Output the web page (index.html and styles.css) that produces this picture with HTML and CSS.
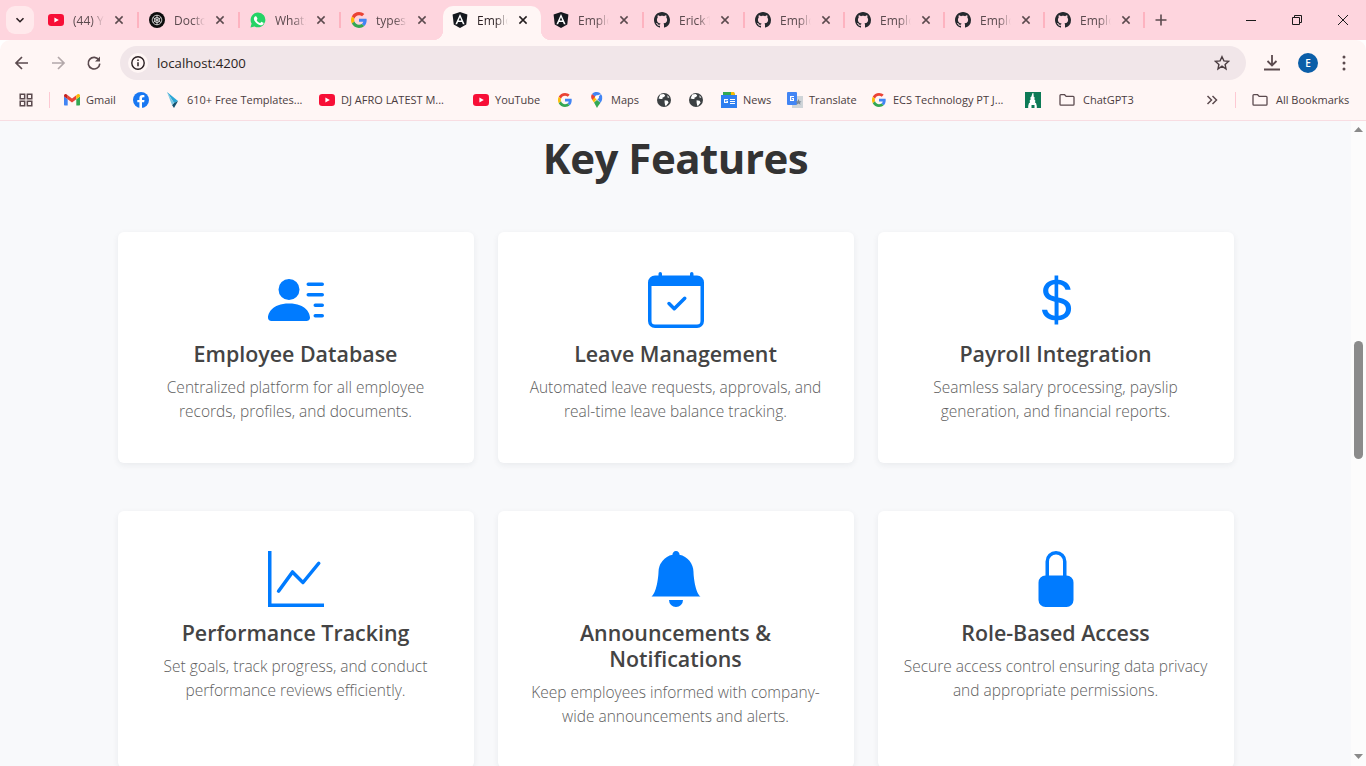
FILE: index.html
```html
<!DOCTYPE html>
<html lang="en">
<head>
<meta charset="utf-8">
<title>Employee Management</title>
<link rel="stylesheet" href="styles.css">
</head>
<body>
<svg class="sprite" aria-hidden="true">
  <symbol id="yt" viewBox="0 0 16 16"><rect y="2" width="16" height="12" rx="3.2" fill="#f70f37"/><path d="M6.4 5.4 10.8 8l-4.4 2.6z" fill="#fff"/></symbol>
  <symbol id="gh" viewBox="0 0 16 16"><path fill="#24292e" d="M8 0C3.58 0 0 3.58 0 8c0 3.54 2.29 6.53 5.47 7.59.4.07.55-.17.55-.38 0-.19-.01-.82-.01-1.49-2.01.37-2.53-.49-2.69-.94-.09-.23-.48-.94-.82-1.13-.28-.15-.68-.52-.01-.53.63-.01 1.08.58 1.23.82.72 1.21 1.87.87 2.33.66.07-.52.28-.87.51-1.07-1.78-.2-3.64-.89-3.64-3.95 0-.87.31-1.59.82-2.15-.08-.2-.36-1.02.08-2.12 0 0 .67-.21 2.2.82.64-.18 1.32-.27 2-.27s1.36.09 2 .27c1.53-1.04 2.2-.82 2.2-.82.44 1.1.16 1.92.08 2.12.51.56.82 1.27.82 2.15 0 3.07-1.87 3.75-3.65 3.95.29.25.54.73.54 1.48 0 1.07-.01 1.93-.01 2.2 0 .21.15.46.55.38A8.01 8.01 0 0 0 16 8c0-4.42-3.58-8-8-8"/></symbol>
  <symbol id="ng" viewBox="0 0 16 16"><path fill="#15181e" d="M8 0 .6 2.6l1.15 9.8L8 16l6.25-3.6 1.15-9.8z"/><path fill="#fff" d="M8 1.9 3.4 12.2h1.7l.93-2.3h3.94l.93 2.3h1.7zm1.33 6.6H6.67L8 5.3z"/></symbol>
  <symbol id="g" viewBox="0 0 48 48"><path fill="#EA4335" d="M24 9.5c3.54 0 6.71 1.22 9.21 3.6l6.85-6.85C35.9 2.38 30.47 0 24 0 14.62 0 6.51 5.38 2.56 13.22l7.98 6.19C12.43 13.72 17.74 9.5 24 9.5z"/><path fill="#4285F4" d="M46.98 24.55c0-1.57-.15-3.09-.38-4.55H24v9.02h12.94c-.58 2.96-2.26 5.48-4.78 7.18l7.73 6c4.51-4.18 7.09-10.36 7.09-17.65z"/><path fill="#FBBC05" d="M10.53 28.59c-.48-1.45-.76-2.99-.76-4.59s.27-3.14.76-4.59l-7.98-6.19C.92 16.46 0 20.12 0 24c0 3.88.92 7.54 2.56 10.78l7.97-6.19z"/><path fill="#34A853" d="M24 48c6.48 0 11.93-2.13 15.89-5.81l-7.73-6c-2.15 1.45-4.92 2.3-8.16 2.3-6.26 0-11.57-4.22-13.47-9.91l-7.98 6.19C6.51 42.62 14.62 48 24 48z"/></symbol>
  <symbol id="globe" viewBox="0 0 16 16"><circle cx="8" cy="8" r="7" fill="#3c4043"/><path fill="#fff" d="M4.2 2.6 7.6 2l1.6 1.3-1 1.7-1.6.4-.2 1.5L4.6 7l-2 -.6zM8.6 8.2l3 .6 1 1.6-2.2 3.2-1.2.2-.6-3.2zM11.4 3.2l2 2.2-1.7.3z"/></symbol>
  <symbol id="folder" viewBox="0 0 16 16"><path fill="none" stroke="#5b4a4e" stroke-width="1.3" d="M1 3.6c0-.5.4-.9.9-.9h3.7l1.6 1.7h6.9c.5 0 .9.4.9.9v7c0 .5-.4.9-.9.9H1.9c-.5 0-.9-.4-.9-.9z"/></symbol>
  <symbol id="x" viewBox="0 0 10 10"><path fill="none" stroke="#5b4a4e" stroke-width="1.5" d="m1.4 1.4 7.2 7.2m0-7.2L1.4 8.6"/></symbol>
</svg>

<div class="browser">
  <header class="tabstrip">
    <button class="collapse"><svg class="glyph-10" viewBox="0 0 10 10"><path fill="none" stroke="#2a1f22" stroke-width="1.6" d="m1.5 3.2 3.5 3.5 3.5-3.5"/></svg></button>
    <div class="tabs">
      <div class="tab sep"><svg class="fav"><use href="#yt"/></svg><span class="tab-title">(44) YouTube</span><svg class="close"><use href="#x"/></svg></div>
      <div class="tab sep"><svg class="fav" viewBox="0 0 16 16"><circle cx="8" cy="8" r="8" fill="#0d0d0d"/><g fill="none" stroke="#e8e8e8" stroke-width=".8"><circle cx="8" cy="8" r="4.8"/><circle cx="8" cy="8" r="2.6"/><path d="M4 5.5 12 10.500M12 5.500 4 10.500M8 3v10"/></g></svg><span class="tab-title">Doctor</span><svg class="close"><use href="#x"/></svg></div>
      <div class="tab sep"><svg class="fav" viewBox="0 0 16 16"><path fill="#25d366" d="M8 .5a7.400 7.400 0 0 0-6.400 11.100L.5 15.500l4-1.050A7.400 7.400 0 1 0 8 .5"/><path fill="#fff" d="M5.700 4.200c-.300 0-.700.100-1 .5-.400.400-.800 1-.800 2 0 1.200.800 2.300 1 2.500.1.200 1.700 2.600 4 3.500 1.900.700 2.300.600 2.800.5.500 0 1.500-.600 1.700-1.200.2-.6.200-1.100.1-1.200l-1.800-.9c-.2-.1-.4-.1-.6.1l-.8 1c-.1.200-.3.200-.5.100-1.200-.5-2.400-1.400-3.100-2.800-.1-.2 0-.3.100-.4l.6-.9v-.4l-.8-1.800c-.2-.4-.4-.4-.5-.4z"/></svg><span class="tab-title">WhatsApp</span><svg class="close"><use href="#x"/></svg></div>
      <div class="tab"><svg class="fav"><use href="#g"/></svg><span class="tab-title">typescript</span><svg class="close"><use href="#x"/></svg></div>
      <div class="tab active"><svg class="fav"><use href="#ng"/></svg><span class="tab-title">Employee</span><svg class="close"><use href="#x"/></svg></div>
      <div class="tab sep"><svg class="fav"><use href="#ng"/></svg><span class="tab-title">Employee</span><svg class="close"><use href="#x"/></svg></div>
      <div class="tab sep"><svg class="fav"><use href="#gh"/></svg><span class="tab-title">Erick1</span><svg class="close"><use href="#x"/></svg></div>
      <div class="tab sep"><svg class="fav"><use href="#gh"/></svg><span class="tab-title">Employee</span><svg class="close"><use href="#x"/></svg></div>
      <div class="tab sep"><svg class="fav"><use href="#gh"/></svg><span class="tab-title">Employee</span><svg class="close"><use href="#x"/></svg></div>
      <div class="tab sep"><svg class="fav"><use href="#gh"/></svg><span class="tab-title">Employee</span><svg class="close"><use href="#x"/></svg></div>
      <div class="tab sep"><svg class="fav"><use href="#gh"/></svg><span class="tab-title">Employee</span><svg class="close"><use href="#x"/></svg></div>
    </div>
    <svg class="plus" viewBox="0 0 12 12"><path stroke="#5b4a4e" stroke-width="1.6" d="M6 .5v11M.5 6h11"/></svg>
    <div class="win">
      <span class="win-btn"><svg class="glyph-10" viewBox="0 0 10 10"><path stroke="#1b1b1b" d="M0 5.500h10"/></svg></span>
      <span class="win-btn"><svg class="glyph-10" viewBox="0 0 10 10"><path fill="none" stroke="#1b1b1b" d="M.5 2.500h7v7h-7zM2.500 2.500V.5h7v7h-2"/></svg></span>
      <span class="win-btn"><svg class="glyph-10" viewBox="0 0 10 10"><path stroke="#1b1b1b" d="m0 0 10 10M10 0 0 10"/></svg></span>
    </div>
  </header>

  <div class="toolbar">
    <span class="tool"><svg class="glyph-16" viewBox="0 0 16 16"><path fill="none" stroke="#5b4a4e" stroke-width="1.7" d="M14 8H2.500M8 2 2 8l6 6"/></svg></span>
    <span class="tool"><svg class="glyph-16" viewBox="0 0 16 16"><path fill="none" stroke="#b3a8aa" stroke-width="1.700" d="M2 8h11.500M8 2l6 6-6 6"/></svg></span>
    <span class="tool"><svg class="glyph-16" viewBox="0 0 16 16"><path fill="none" stroke="#5b4a4e" stroke-width="1.600" d="M13 5.200A5.800 5.800 0 1 0 13.800 8.600"/><path fill="#5b4a4e" d="M14 1.500v5H9z"/></svg></span>
    <div class="omnibox">
      <span class="site-info"><svg class="glyph-16" viewBox="0 0 16 16"><circle cx="8" cy="8" r="6.200" fill="none" stroke="#2a1f22" stroke-width="1.400"/><path stroke="#2a1f22" stroke-width="1.500" d="M8 7.200v4M8 4.400v1.500"/></svg></span>
      <span class="url">localhost:4200</span>
      <svg class="star" viewBox="0 0 16 16"><path fill="none" stroke="#4a3c40" stroke-width="1.400" d="m8 1.700 1.900 4.200 4.600.5-3.400 3.100.9 4.500L8 11.200l-4 2.800.9-4.500L1.500 6.400l4.600-.5z"/></svg>
    </div>
    <div class="tool-gap"></div>
    <span class="tool"><svg class="glyph-16" viewBox="0 0 16 16"><path fill="none" stroke="#5b4a4e" stroke-width="1.800" d="M8 0v10M3.500 6 8 10.500 12.500 6M0 14.500h16"/></svg></span>
    <span class="tool"><span class="avatar">E</span></span>
    <span class="tool"><svg class="glyph-16" viewBox="0 0 16 16"><g fill="#5b4a4e"><circle cx="8" cy="2" r="1.500"/><circle cx="8" cy="8" r="1.500"/><circle cx="8" cy="14" r="1.500"/></g></svg></span>
  </div>

  <nav class="bookmarks">
    <span class="bm"><svg class="fav" viewBox="-1 -1 18 18"><path fill="none" stroke="#5b4a4e" stroke-width="1.700" d="M1.500 1.500h5v5h-5zM9.500 1.500h5v5h-5zM1.500 9.500h5v5h-5zM9.500 9.500h5v5h-5z"/></svg></span>
    <span class="bar-sep"></span>
    <span class="bm"><svg class="fav" viewBox="0 0 16 16"><path fill="#4285f4" d="M1 13.500h2.700V7.200L0 4.400V12.400c0 .6.400 1.100 1 1.100"/><path fill="#34a853" d="M12.300 13.500H15c.6 0 1-.5 1-1.100V4.400l-3.700 2.800"/><path fill="#ea4335" d="M3.700 7.200V3.300L8 6.500l4.300-3.200v3.900L8 10.400z"/><path fill="#c5221f" d="M0 4.400 3.700 7.200V3.300L2.400 2.300C1.300 1.500 0 2.300 0 3.700z"/><path fill="#fbbc04" d="M12.300 3.300v3.900L16 4.400v-.7c0-1.400-1.300-2.200-2.400-1.400z"/></svg><span>Gmail</span></span>
    <span class="bm"><svg class="fav" viewBox="0 0 16 16"><circle cx="8" cy="8" r="8" fill="#1877f2"/><path fill="#fff" d="M11.100 10.300 11.500 8H9V6.500c0-.6.300-1.200 1.300-1.200h1.100v-2s-1-.2-1.900-.2c-1.900 0-3.100 1.100-3.100 3.200V8H4.300v2.300h2.100V16h2.600v-5.700z"/></svg></span>
    <span class="bm"><svg class="fav" viewBox="0 0 16 16"><path fill="#2aa6d6" d="M2 0l11 9-4 2z"/><path fill="#12506e" d="M9 11l4-2-4 7-2-3z"/><path fill="#7cc7e2" d="M2 0l5 13 2-2z"/></svg><span>610+ Free Templates...</span></span>
    <span class="bm"><svg class="fav"><use href="#yt"/></svg><span>DJ AFRO LATEST M...</span></span>
    <span class="bm"><svg class="fav"><use href="#yt"/></svg><span>YouTube</span></span>
    <span class="bm"><svg class="fav gsmall"><use href="#g"/></svg></span>
    <span class="bm"><svg class="fav" viewBox="0 0 16 16"><path fill="#34a853" d="M5 10.500 8 16c1-2.200 2.400-3.600 3.500-5.200L8 8z"/><path fill="#fbbc04" d="M3.300 8c.4.900 1 1.700 1.700 2.500L8.500 6 5 3.700z"/><path fill="#ea4335" d="M3 2.100A5.100 5.100 0 0 0 3.300 8l3.300-3.700z"/><path fill="#4285f4" d="M8 0a5.200 5.200 0 0 0-5 2.100l3 2.500L11.900 2A5.200 5.200 0 0 0 8 0"/><path fill="#4285f4" d="M11.900 2 8 6.700l3.500 4.100c1-1.300 1.700-2.700 1.700-4.500A5 5 0 0 0 11.900 2"/><circle cx="8" cy="5.200" r="1.900" fill="#fff"/></svg><span>Maps</span></span>
    <span class="bm"><svg class="fav"><use href="#globe"/></svg></span>
    <span class="bm"><svg class="fav"><use href="#globe"/></svg></span>
    <span class="bm"><svg class="fav" viewBox="0 0 16 16"><path fill="#34a853" d="M2 0h11l1 3H2z"/><path fill="#fbbc04" d="M10 0h3l1 3h-4z"/><rect y="3" width="16" height="13" fill="#2f7ff0"/><path fill="#fff" d="M3 7h4v1H4.200v2h1.600V9.500H5V8.700h2V11H3zM9 7h5v1H9zM9 9h5v1H9zM9 11h5v1H9z"/></svg><span>News</span></span>
    <span class="bm"><svg class="fav" viewBox="0 0 16 16"><rect x="5" y="4" width="11" height="12" fill="#cfd4d8"/><rect width="10" height="13" rx="1" fill="#4285f4"/><path fill="#fff" d="M3 4h4v1H4.300v3h1.500V7H5V6h2v3H3z"/><path fill="#7d8a96" d="m11.500 7 1 2.200 2 .2-1.500 1.300.5 2-2-1.100-2 1.100.5-2L8.500 9.400l2-.2z"/></svg><span>Translate</span></span>
    <span class="bm"><svg class="fav gsmall"><use href="#g"/></svg><span>ECS Technology PT J...</span></span>
    <span class="bm"><svg class="fav" viewBox="0 0 16 16"><rect width="16" height="16" fill="#0d7a56"/><path fill="#fff" d="M7.600 1h.8l.4 4h.7v3h.7v3h.8l.8 3v2H9.500v-3h-3v3H3.200v-2l.8-3h.8V8h.7V5h.7z"/></svg></span>
    <span class="bm folder-bm"><svg class="fav"><use href="#folder"/></svg><span>ChatGPT3</span></span>
    <span class="bm"><svg class="chev" viewBox="0 0 12 12"><path fill="none" stroke="#5b4a4e" stroke-width="1.500" d="m1.500 2 4 4-4 4M6.500 2l4 4-4 4"/></svg></span>
    <span class="bar-sep"></span>
    <span class="bm folder-bm"><svg class="fav"><use href="#folder"/></svg><span>All Bookmarks</span></span>
  </nav>

  <div class="viewport">
    <main class="page">
      <h2 class="page-title">Key Features</h2>
      <section class="grid">
        <article class="card">
          <svg class="card-icon" viewBox="0 0 16 16"><path d="M6 8a3 3 0 1 0 0-6 3 3 0 0 0 0 6m-5 6s-1 0-1-1 1-4 6-4 6 3 6 4-1 1-1 1zM11 3.500a.5.5 0 0 1 .5-.5h4a.5.5 0 0 1 0 1h-4a.5.5 0 0 1-.5-.5m.5 2.500a.5.5 0 0 0 0 1h4a.5.5 0 0 0 0-1zm2 3a.5.5 0 0 0 0 1h2a.5.5 0 0 0 0-1zm0 3a.5.5 0 0 0 0 1h2a.5.5 0 0 0 0-1z"/></svg>
          <h3>Employee Database</h3>
          <p>Centralized platform for all employee records, profiles, and documents.</p>
        </article>
        <article class="card">
          <svg class="card-icon" viewBox="0 0 16 16"><path d="M10.854 7.146a.5.5 0 0 1 0 .708l-3 3a.5.5 0 0 1-.708 0l-1.500-1.500a.5.5 0 1 1 .708-.708L7.500 9.793l2.646-2.647a.5.5 0 0 1 .708 0"/><path d="M3.500 0a.5.5 0 0 1 .5.5V1h8V.5a.5.5 0 0 1 1 0V1h1a2 2 0 0 1 2 2v11a2 2 0 0 1-2 2H2a2 2 0 0 1-2-2V3a2 2 0 0 1 2-2h1V.5a.5.5 0 0 1 .5-.5M1 4v10a1 1 0 0 0 1 1h12a1 1 0 0 0 1-1V4z"/></svg>
          <h3>Leave Management</h3>
          <p>Automated leave requests, approvals, and real-time leave balance tracking.</p>
        </article>
        <article class="card">
          <svg class="card-icon" viewBox="0 0 16 16"><path d="M4 10.781c.148 1.667 1.513 2.850 3.591 3.003V15h1.043v-1.216c2.270-.179 3.678-1.438 3.678-3.300 0-1.590-.947-2.510-2.956-3.028l-.722-.187V3.467c1.122.110 1.879.714 2.070 1.616h1.470c-.166-1.600-1.540-2.748-3.540-2.875V1H7.591v1.233c-1.939.230-3.270 1.472-3.270 3.156 0 1.454.966 2.483 2.661 2.917l.610.162v4.031c-1.149-.170-1.940-.800-2.131-1.718zm3.391-3.836c-1.043-.263-1.600-.825-1.600-1.616 0-.944.704-1.641 1.800-1.828v3.495l-.200-.050zm1.591 1.872c1.287.323 1.852.859 1.852 1.769 0 1.097-.826 1.828-2.100 1.939V8.730z"/></svg>
          <h3>Payroll Integration</h3>
          <p>Seamless salary processing, payslip generation, and financial reports.</p>
        </article>
        <article class="card">
          <svg class="card-icon" viewBox="0 0 16 16"><path d="M0 0h1v15h15v1H0zm14.817 3.113a.5.5 0 0 1 .070.704l-4.500 5.500a.5.5 0 0 1-.740.037L7.060 6.767l-3.656 5.027a.5.5 0 0 1-.808-.588l4-5.500a.5.5 0 0 1 .758-.060l2.609 2.610 4.150-5.073a.5.5 0 0 1 .704-.070"/></svg>
          <h3>Performance Tracking</h3>
          <p>Set goals, track progress, and conduct performance reviews efficiently.</p>
        </article>
        <article class="card">
          <svg class="card-icon" viewBox="0 0 16 16"><path d="M8 16a2 2 0 0 0 2-2H6a2 2 0 0 0 2 2m.995-14.901a1 1 0 1 0-1.990 0A5 5 0 0 0 3 6c0 1.098-.5 6-2 7h14c-1.500-1-2-5.902-2-7 0-2.420-1.720-4.440-4.005-4.901"/></svg>
          <h3>Announcements &amp; Notifications</h3>
          <p>Keep employees informed with company-wide announcements and alerts.</p>
        </article>
        <article class="card">
          <svg class="card-icon" viewBox="0 0 16 16"><path d="M8 1a2 2 0 0 1 2 2v4H6V3a2 2 0 0 1 2-2m3 6V3a3 3 0 0 0-6 0v4a2 2 0 0 0-2 2v5a2 2 0 0 0 2 2h6a2 2 0 0 0 2-2V9a2 2 0 0 0-2-2"/></svg>
          <h3>Role-Based Access</h3>
          <p>Secure access control ensuring data privacy and appropriate permissions.</p>
        </article>
      </section>
    </main>
    <aside class="scrollbar">
      <svg class="arrow" viewBox="0 0 9 5"><path fill="#8a8a8a" d="M4.500 0 9 5H0z"/></svg>
      <div class="thumb"></div>
      <svg class="arrow arrow-down" viewBox="0 0 9 5"><path fill="#8a8a8a" d="M4.500 5 9 0H0z"/></svg>
    </aside>
  </div>
</div>
</body>
</html>
```
FILE: styles.css
```css
* { box-sizing: border-box; }
html, body { margin: 0; height: 100%; overflow: hidden; }
body { font-family: "Open Sans", "Noto Sans", sans-serif; color: #333; }
.sprite { display: none; }

.browser { display: flex; flex-direction: column; height: 766px; }

/* tab strip */
.tabstrip { display: flex; align-items: flex-start; height: 40px; background: #fed5de; flex: none; }
.collapse { width: 28px; height: 28px; margin: 6px 0 0 6px; padding: 0; border: 0; border-radius: 9px; background: #ffe9ec; display: flex; align-items: center; justify-content: center; flex: none; }
.glyph-10 { width: 10px; height: 10px; display: block; }
.glyph-16 { width: 16px; height: 16px; display: block; }
.tabs { display: grid; grid-template-columns: repeat(7, 101px) repeat(4, 100px); margin-left: 4px; flex: none; }
.tab { position: relative; display: flex; align-items: center; height: 40px; padding: 0 0 0 10px; font-size: 12px; color: #5b4a4e; }
.tab.sep::after { content: ""; position: absolute; right: 0; top: 12px; width: 2px; height: 16px; background: #fdb3c0; }
.tab.active { height: 34px; margin: 6px 2px 0 1px; padding: 0 0 6px 9px; background: #fff6f5; border-radius: 10px 10px 0 0; color: #2a1f22; }
.tab.active::before, .tab.active::after { content: ""; position: absolute; bottom: 0; width: 10px; height: 10px; }
.tab.active::before { left: -10px; background: radial-gradient(circle at 0 0, transparent 10px, #fff6f5 10.500px); }
.tab.active::after { right: -10px; background: radial-gradient(circle at 100% 0, transparent 10px, #fff6f5 10.500px); }
.fav { width: 16px; height: 16px; display: block; flex: none; }
.gsmall { width: 14px; height: 14px; margin: 1px; }
.tab-title { width: 31px; margin-left: 9px; white-space: nowrap; overflow: hidden; -webkit-mask-image: linear-gradient(to right, #000 60%, transparent); mask-image: linear-gradient(to right, #000 60%, transparent); }
.close { width: 10px; height: 10px; margin-left: 10px; flex: none; }
.tab.active .close { filter: brightness(.4); }
.plus { width: 12px; height: 12px; margin: 14px 0 0 10px; flex: none; }
.win { display: flex; margin-left: auto; }
.win-btn { width: 46px; height: 40px; display: flex; align-items: center; justify-content: center; }

/* toolbar */
.toolbar { display: flex; align-items: center; height: 46px; padding: 0 4px; background: #fff6f5; border-radius: 10px 10px 0 0; flex: none; }
.tool { width: 36px; height: 36px; display: flex; align-items: center; justify-content: center; flex: none; }
.omnibox { display: flex; align-items: center; width: 1126px; height: 34px; margin-left: 8px; padding: 0 16px 0 8px; background: #f1e6e9; border-radius: 17px; flex: none; }
.site-info { width: 20px; height: 20px; display: flex; align-items: center; justify-content: center; background: #fff6f5; border-radius: 50%; }
.url { margin-left: 9px; font-size: 13.200px; color: #2a1f22; }
.star { width: 16px; height: 16px; margin-left: auto; }
.tool-gap { width: 8px; flex: none; }
.avatar { width: 20px; height: 20px; border-radius: 50%; background: #0b5ea8; color: #fff; font-size: 10px; font-weight: 600; display: flex; align-items: center; justify-content: center; }

/* bookmarks */
.bookmarks { display: grid; grid-template-columns: 31px 15px 69px 32px 154px 154px 84px 32px 67px 32px 33px 66px 84px 154px 34px 147px 29px 17px 1fr; align-items: center; height: 35px; padding: 0 0 7px 18px; background: #fff6f5; border-bottom: 1px solid #f8dde2; flex: none; font-size: 11px; color: #4a3c40; }
.bm { display: flex; align-items: center; gap: 6px; white-space: nowrap; }
.folder-bm { gap: 8px; }
.bar-sep { width: 1px; height: 16px; background: #fdc9d3; }
.chev { width: 12px; height: 12px; display: block; }

/* page */
.viewport { display: flex; flex: 1; min-height: 0; background: #f8f9fb; }
.page { flex: 1; min-width: 0; padding-top: 9px; overflow: hidden; }
.page-title { margin: 0 0 46px; font-size: 42px; line-height: 56px; font-weight: 700; letter-spacing: -.5px; text-align: center; color: #333; }
.grid { display: grid; grid-template-columns: repeat(3, 356px); gap: 48px 24px; justify-content: center; }
.card { background: #fff; border-radius: 6px; box-shadow: 0 2px 6px rgba(30, 40, 60, .07); padding: 40px 24px; text-align: center; }
.card-icon { width: 56px; height: 56px; display: block; margin: 0 auto 13px; fill: #007bff; }
.card h3 { margin: 0 0 8px; font-size: 21.400px; line-height: 26px; font-weight: 600; color: #444; }
.card p { margin: 0; font-size: 15.500px; line-height: 24px; font-weight: 300; color: #606060; }

/* scrollbar */
.scrollbar { width: 15px; flex: none; display: flex; flex-direction: column; align-items: center; background: #fcfcfc; padding: 6px 0 7px; }
.arrow { width: 9px; height: 5px; flex: none; }
.arrow-down { margin-top: auto; }
.thumb { width: 9px; height: 118px; margin-top: 209px; border-radius: 5px; background: #8b8b8b; flex: none; }
```
